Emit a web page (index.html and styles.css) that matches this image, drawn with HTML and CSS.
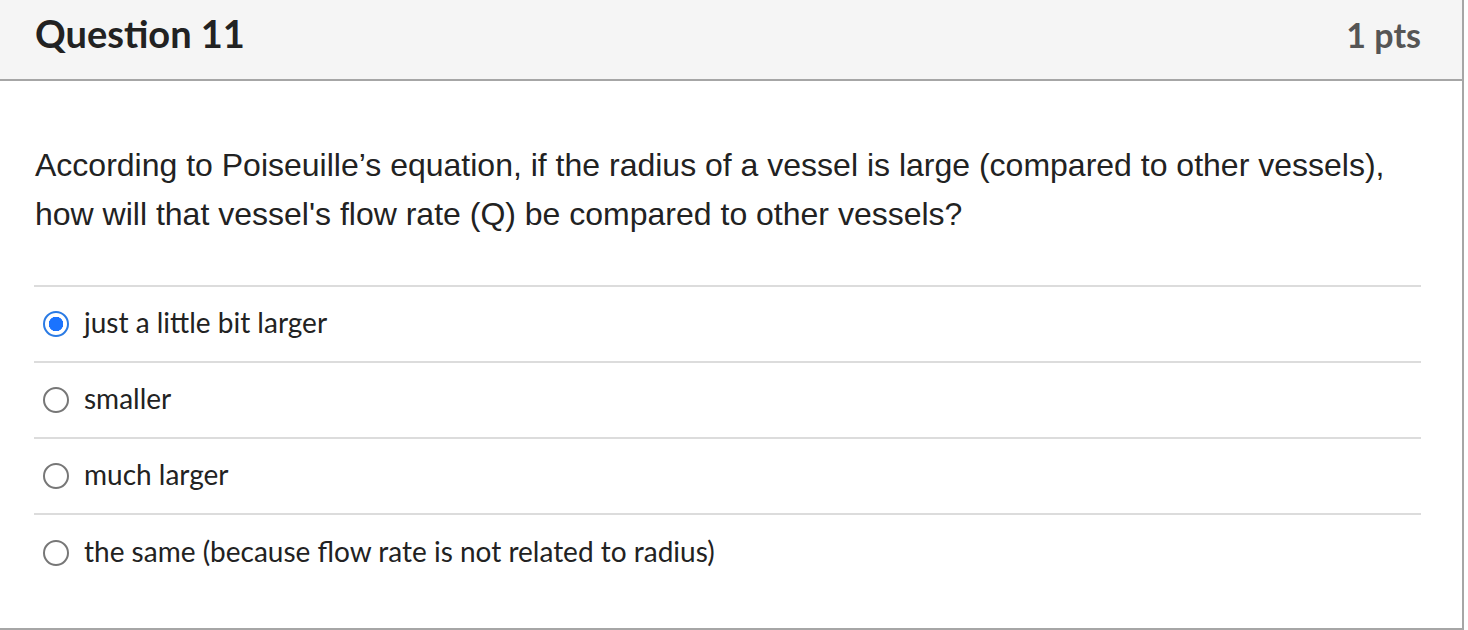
FILE: index.html
```html
<!DOCTYPE html>
<html>
<head>
<meta charset="utf-8">
<link rel="stylesheet" href="styles.css">
</head>
<body>
<div class="question">
  <div class="header">
    <h2 class="title">Question 11</h2>
    <span class="pts">1 pts</span>
  </div>
  <div class="body">
    <p class="text">According to Poiseuille’s equation, if the radius of a vessel is large (compared to other vessels), how will that vessel's flow rate (Q) be compared to other vessels?</p>
    <div class="answers">
      <label class="answer"><span class="radio checked"></span><span class="label">just a little bit larger</span></label>
      <label class="answer"><span class="radio"></span><span class="label">smaller</span></label>
      <label class="answer"><span class="radio"></span><span class="label">much larger</span></label>
      <label class="answer"><span class="radio"></span><span class="label">the same (because flow rate is not related to radius)</span></label>
    </div>
  </div>
</div>
</body>
</html>
```
FILE: styles.css
```css
html, body {
  margin: 0;
  padding: 0;
  background: #fff;
}
.question {
  width: 1462px;
  height: 628px;
  border-right: 2px solid #a6a6a6;
  border-bottom: 2px solid #a6a6a6;
  box-sizing: content-box;
}
.header {
  height: 81px;
  background: #f5f5f5;
  border-bottom: 2px solid #a6a6a6;
  display: flex;
  align-items: baseline;
  justify-content: space-between;
  padding: 11px 41px 0 35px;
  box-sizing: border-box;
}
.title {
  margin: 0;
  font-family: Lato, sans-serif;
  font-weight: 700;
  font-size: 38px;
  line-height: 1.2;
  color: #222;
}
.pts {
  font-family: Lato, sans-serif;
  font-weight: 700;
  font-size: 34px;
  color: #555;
}
.body {
  padding: 0 41px 0 34px;
}
.text {
  margin: 0;
  padding: 60px 0 0 1px;
  font-family: "Liberation Sans", Arial, sans-serif;
  font-size: 32px;
  line-height: 49px;
  color: #222;
  height: 142px;
  box-sizing: border-box;
}
.answers {
  margin-top: 62px;
  border-top: 2px solid #dcdcdc;
}
.answer {
  display: flex;
  align-items: center;
  height: 76px;
  border-bottom: 2px solid #dcdcdc;
  box-sizing: border-box;
  padding-left: 9px;
  font-family: Lato, sans-serif;
  font-size: 28px;
  color: #222;
}
.answer:last-child {
  border-bottom: none;
}
.radio {
  width: 26px;
  height: 26px;
  border: 2px solid #777;
  border-radius: 50%;
  box-sizing: border-box;
  margin-right: 15px;
  flex: none;
}
.radio.checked {
  border-color: #2b7be4;
  background: radial-gradient(circle, #1a73ff 0 7px, #fff 7.5px);
}
.label {
  line-height: 1;
  padding-bottom: 5px;
}
```
